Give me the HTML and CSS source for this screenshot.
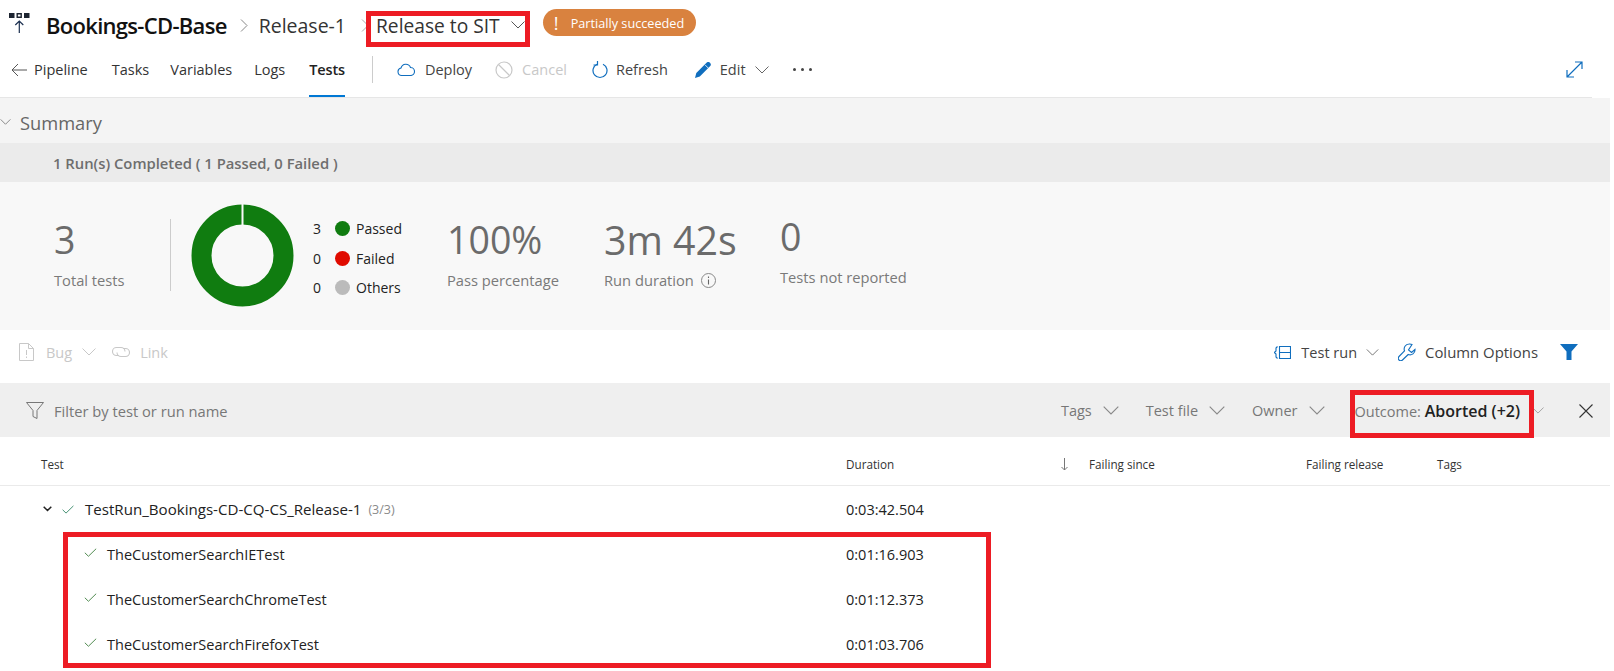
FILE: index.html
```html
<!DOCTYPE html>
<html lang="en">
<head>
<meta charset="utf-8">
<title>Bookings-CD-Base</title>
<link rel="stylesheet" href="styles.css">
</head>
<body>
<svg class="defs" width="0" height="0" aria-hidden="true">
  <symbol id="chev" viewBox="0 0 14 8"><path d="M.5.5 7 7 13.500.5" fill="none" stroke="currentColor" stroke-width="1"/></symbol>
  <symbol id="check" viewBox="0 0 14 10"><path d="M.7 5.300 4.700 9.200 13.300.8" fill="none" stroke="currentColor" stroke-width="1.100"/></symbol>
</svg>
<div class="page">
  <header class="titlebar">
    <svg class="logo" width="21" height="20" viewBox="0 0 21 20"><path d="M0 0h5.500v5H0zM15 0h5.500v5H15z" fill="#1c2430"/><path d="M8.200.7h4v3.600h-4z" fill="none" stroke="#1c2430" stroke-width="1.400"/><path d="M10.300 20V8M6.300 12l4-4 4 4" fill="none" stroke="#1c3050" stroke-width="1.200"/></svg>
    <span class="t-name">Bookings-CD-Base</span>
    <svg class="crumb" width="8" height="13" viewBox="0 0 8 13"><path d="M1 .5 7 6.500 1 12.500" fill="none" stroke="#888"/></svg>
    <span class="t-release">Release-1</span>
    <svg class="crumb crumb-2" width="8" height="13" viewBox="0 0 8 13"><path d="M1 .5 7 6.500 1 12.500" fill="none" stroke="#aaa"/></svg>
    <span class="t-stage">Release to SIT</span>
    <svg class="t-chev" width="14" height="8"><use href="#chev"/></svg>
    <span class="badge"><b class="badge-mark">!</b>Partially succeeded</span>
  </header>

  <nav class="toolbar">
    <svg class="back" width="16" height="14" viewBox="0 0 16 14"><path d="M16 7H1M7 1 1 7l6 6" fill="none" stroke="#555"/></svg>
    <a class="tab tab-pipeline">Pipeline</a>
    <a class="tab tab-tasks">Tasks</a>
    <a class="tab tab-vars">Variables</a>
    <a class="tab tab-logs">Logs</a>
    <a class="tab tab-tests">Tests</a>
    <span class="tool-sep"></span>
    <svg class="ico-deploy" width="18" height="13" viewBox="0 0 18 13"><path d="M4.500 12.500a3.800 3.800 0 0 1-.5-7.500 5 5 0 0 1 9.500-.5 4 4 0 0 1 0 8z" fill="none" stroke="#106ebe" stroke-width="1.100"/></svg>
    <span class="cmd cmd-deploy">Deploy</span>
    <svg class="ico-cancel" width="18" height="18" viewBox="0 0 18 18"><circle cx="9" cy="9" r="8" fill="none" stroke="#c8c8c8" stroke-width="1.200"/><path d="M3.500 3.500l11 11" stroke="#c8c8c8" stroke-width="1.200"/></svg>
    <span class="cmd cmd-off cmd-cancel">Cancel</span>
    <svg class="ico-refresh" width="16" height="18" viewBox="0 0 16 18"><path d="M5 3.200a7 7 0 1 0 6 0" fill="none" stroke="#106ebe" stroke-width="1.200"/><path d="M5.500 0v4H1.500" fill="none" stroke="#106ebe" stroke-width="1.200"/></svg>
    <span class="cmd cmd-refresh">Refresh</span>
    <svg class="ico-edit" width="16" height="16" viewBox="0 0 16 16"><path d="M0 16l1.300-5L11.500.8a2.300 2.300 0 0 1 3.500 3.500L4.800 14.500z" fill="#106ebe"/><path d="M10 2.800l3.300 3.300" stroke="#fff" stroke-width=".8"/></svg>
    <span class="cmd cmd-edit">Edit</span>
    <svg class="cmd-chev" width="14" height="8"><use href="#chev"/></svg>
    <span class="dots"><i></i><i></i><i></i></span>
    <svg class="ico-expand" width="17" height="17" viewBox="0 0 17 17"><path d="M1 16 16 1M9 1h7v7M1 9v7h7" fill="none" stroke="#106ebe" stroke-width="1.200"/></svg>
  </nav>

  <section class="panel">
    <div class="summary-head">
      <svg class="sum-chev" width="11" height="6"><use href="#chev"/></svg>
      <span>Summary</span>
    </div>
    <div class="runs">1 Run(s) Completed ( 1 Passed, 0 Failed )</div>
    <div class="stats">
      <div class="stat stat-total"><div class="num">3</div><div class="lbl">Total tests</div></div>
      <div class="stat-div"></div>
      <svg class="donut" width="103" height="103" viewBox="0 0 103 103"><circle cx="51.500" cy="51.500" r="41" fill="none" stroke="#107c10" stroke-width="20"/><rect x="50.500" y="0" width="2" height="21" fill="#f8f8f8"/></svg>
      <ul class="legend">
        <li><span class="l-count">3</span><i class="l-dot l-pass"></i>Passed</li>
        <li><span class="l-count">0</span><i class="l-dot l-fail"></i>Failed</li>
        <li><span class="l-count">0</span><i class="l-dot l-other"></i>Others</li>
      </ul>
      <div class="stat"><div class="num">100%</div><div class="lbl">Pass percentage</div></div>
      <div class="stat"><div class="num num-run">3m 42s</div><div class="lbl">Run duration<svg class="info" width="15" height="15" viewBox="0 0 15 15"><circle cx="7.500" cy="7.500" r="7" fill="none" stroke="#888"/><path d="M7.500 6.500v5M7.500 3.500v1.400" stroke="#666" stroke-width="1.100"/></svg></div></div>
      <div class="stat stat-up"><div class="num">0</div><div class="lbl">Tests not reported</div></div>
    </div>
  </section>

  <div class="actions">
    <svg class="ico-bug" width="15" height="18" viewBox="0 0 15 18"><path d="M.5.500h9l5 5v12H.5zM9.500.5v5h5M7.500 7v5M7.500 13.500v1.500" fill="none" stroke="#c8c8c8"/></svg>
    <span class="act-off act-bug">Bug</span>
    <svg class="act-chev" width="14" height="8"><use href="#chev"/></svg>
    <svg class="ico-link" width="18" height="12" viewBox="0 0 18 12"><path d="M7 9.500H4.500a4 4 0 0 1 0-8H9a4 4 0 0 1 4 4" fill="none" stroke="#c8c8c8" stroke-width="1.100"/><path d="M11 2.500h2.500a4 4 0 0 1 0 8H9a4 4 0 0 1-4-4" fill="none" stroke="#c8c8c8" stroke-width="1.100"/></svg>
    <span class="act-off act-link">Link</span>
    <span class="spacer"></span>
    <svg class="ico-run" width="17" height="13" viewBox="0 0 17 13"><path d="M5.500.5h11v12h-11zM5.500 6.500h11" fill="none" stroke="#106ebe" stroke-width="1.100"/><path d="M3.500.5 2 2v3L.3 6.500 2 8v3l1.500 1.500" fill="none" stroke="#106ebe" stroke-width="1.100"/></svg>
    <span class="act act-run">Test run</span>
    <svg class="run-chev" width="13" height="7"><use href="#chev"/></svg>
    <svg class="ico-wrench" width="18" height="18" viewBox="0 0 18 18"><path d="M11 1a5 5 0 0 0-4.500 6.800L1 13.500a2.400 2.400 0 0 0 3.500 3.500l5.700-5.500A5 5 0 0 0 17 6.500l-3.500 3-3-2.500L14 1.500A5 5 0 0 0 11 1z" fill="none" stroke="#106ebe" stroke-width="1.100"/></svg>
    <span class="act act-cols">Column Options</span>
    <svg class="ico-filter" width="18" height="16" viewBox="0 0 18 16"><path d="M0 0h18l-6.500 7.500V16h-5V7.500z" fill="#106ebe"/></svg>
  </div>

  <div class="filterbar">
    <svg class="ico-funnel" width="18" height="17" viewBox="0 0 18 17"><path d="M.5.500h17L11 8.500v8L7 14.500v-6z" fill="none" stroke="#777"/></svg>
    <span class="fb-search">Filter by test or run name</span>
    <span class="spacer"></span>
    <span class="fb-item fb-tags">Tags</span><svg class="fb-chev" width="16" height="9"><use href="#chev"/></svg>
    <span class="fb-item fb-file">Test file</span><svg class="fb-chev" width="16" height="9"><use href="#chev"/></svg>
    <span class="fb-item fb-owner">Owner</span><svg class="fb-chev" width="16" height="9"><use href="#chev"/></svg>
    <span class="fb-item fb-outcome">Outcome: <b>Aborted (+2)</b></span><svg class="fb-chev fb-chev-last" width="12" height="7"><use href="#chev"/></svg>
    <svg class="fb-x" width="14" height="14" viewBox="0 0 14 14"><path d="M.5.500l13 13M13.500.500l-13 13" stroke="#333" stroke-width="1.100"/></svg>
  </div>

  <div class="grid thead">
    <span class="c-test">Test</span>
    <span class="c-dur">Duration</span>
    <svg class="c-sort" width="7" height="13" viewBox="0 0 7 13"><path d="M3.500 0v12M.5 9l3 3 3-3" fill="none" stroke="#777"/></svg>
    <span class="c-since">Failing since</span>
    <span class="c-rel">Failing release</span>
    <span class="c-tags">Tags</span>
  </div>

  <div class="grid row row-group">
    <span class="c-test group-name">
      <svg class="g-chev" width="9" height="6" viewBox="0 0 9 6"><path d="M.7.700 4.500 4.500 8.300.7" fill="none" stroke="#222" stroke-width="1.500"/></svg>
      <svg class="g-check" width="12" height="9"><use href="#check"/></svg>
      <span class="g-text">TestRun_Bookings-CD-CQ-CS_Release-1</span>
      <span class="g-count">(3/3)</span>
    </span>
    <span class="c-dur">0:03:42.504</span>
  </div>
  <div class="grid row">
    <span class="c-test case"><svg class="check" width="13" height="9"><use href="#check"/></svg>TheCustomerSearchIETest</span>
    <span class="c-dur">0:01:16.903</span>
  </div>
  <div class="grid row">
    <span class="c-test case"><svg class="check" width="13" height="9"><use href="#check"/></svg>TheCustomerSearchChromeTest</span>
    <span class="c-dur">0:01:12.373</span>
  </div>
  <div class="grid row">
    <span class="c-test case"><svg class="check" width="13" height="9"><use href="#check"/></svg>TheCustomerSearchFirefoxTest</span>
    <span class="c-dur">0:01:03.706</span>
  </div>

  <div class="mark mark-stage"></div>
  <div class="mark mark-outcome"></div>
  <div class="mark mark-rows"></div>
</div>
</body>
</html>
```

FILE: styles.css
```css
* { box-sizing: border-box; }
html, body { margin: 0; padding: 0; background: #fff; }
body { font-family: "Open Sans", "Noto Sans", sans-serif; font-size: 14.5px; color: #222; overflow: hidden; }
svg { display: block; flex: none; }
.defs { position: absolute; }
.page { position: relative; width: 1614px; height: 671px; overflow: hidden; }
.spacer { flex: 1; }

/* title bar */
.titlebar { height: 50px; display: flex; align-items: center; padding-left: 9px; }
.logo { margin-top: -4px; }
.t-name { margin-left: 16px; font-size: 22px; font-weight: 600; color: #111; letter-spacing: -.7px; white-space: nowrap; }
.crumb { margin-left: 13px; }
.t-release { margin-left: 11px; font-size: 19.5px; color: #333; }
.crumb-2 { margin-left: 15px; }
.t-stage { margin-left: 7px; font-size: 19.2px; color: #333; white-space: nowrap; }
.t-chev { margin-left: 11px; color: #555; }
.badge { margin-left: 18px; width: 153px; height: 27px; margin-top: -5px; background: #d9823f; color: #fff; border-radius: 14px; font-size: 12.7px; display: flex; align-items: center; padding-left: 11px; white-space: nowrap; }
.badge-mark { width: 17px; font-size: 18px; font-weight: 400; }

/* toolbar */
.toolbar { height: 48px; border-bottom: 1px solid #e6e6e6; width: 1592px; display: flex; align-items: center; padding-left: 11px; position: relative; }
.toolbar > * { margin-top: -8px; }
.tab { color: #333; white-space: nowrap; }
.toolbar .tab-pipeline { margin-left: 7px; }
.toolbar .tab-tasks { margin-left: 24px; }
.toolbar .tab-vars { margin-left: 21px; }
.toolbar .tab-logs { margin-left: 22px; }
.toolbar .tab-tests { margin-left: 24px; margin-top: 0; letter-spacing: -.15px; font-weight: 600; color: #222; align-self: stretch; display: flex; align-items: center; border-bottom: 2px solid #0078d4; height: 47px; padding-bottom: 7px; }
.tool-sep { width: 1px; height: 27px; background: #ccc; margin-left: 27px; }
.cmd { color: #444; white-space: nowrap; }
.ico-deploy { margin-left: 24px; }
.cmd-deploy { margin-left: 10px; }
.ico-cancel { margin-left: 23px; }
.cmd-cancel { margin-left: 9px; }
.cmd-off { color: #c8c8c8; }
.ico-refresh { margin-left: 25px; }
.cmd-refresh { margin-left: 8px; }
.ico-edit { margin-left: 27px; }
.cmd-edit { margin-left: 9px; }
.cmd-chev { margin-left: 9px; color: #666; }
.dots { margin-left: 24px; display: flex; gap: 5px; }
.dots i { width: 3px; height: 3px; background: #444; border-radius: 50%; }
.toolbar .ico-expand { position: absolute; left: 1566px; top: 11px; margin-top: 0; }

/* summary */
.panel { width: 1610px; background: #f8f8f8; height: 232px; }
.summary-head { height: 45px; background: #f4f4f4; display: flex; align-items: center; font-size: 18.3px; color: #666; padding-top: 3px; }
.sum-chev { color: #666; margin-right: 9px; }
.runs { height: 39px; background: #ebebeb; display: flex; align-items: center; padding-left: 53px; font-size: 14.8px; font-weight: 600; color: #6e6e6e; }
.stats { display: grid; grid-template-columns: 116px 21px 122px 134px 157px 176px 1fr; margin-left: 54px; }
.stat { padding-top: 33px; }
.stat-up { padding-top: 30px; }
.num { font-size: 37.5px; font-weight: 500; line-height: 50px; color: #6b6b6b; }
.num-run { font-size: 39.3px; }
.lbl { margin-top: 5px; line-height: 20px; color: #7a7a7a; display: flex; align-items: center; font-size: 14.7px; white-space: nowrap; }
.info { margin-left: 7px; }
.stat-div { margin-top: 37px; width: 1px; height: 72px; background: #ccc; }
.donut { margin-top: 22px; }
.legend { list-style: none; margin: 32px 0 0; padding: 0; }
.legend li { height: 29.500px; display: flex; align-items: center; font-size: 14px; color: #222; }
.l-count { width: 22px; }
.l-dot { width: 15px; height: 15px; border-radius: 50%; margin-right: 6px; }
.l-pass { background: #107c10; }
.l-fail { background: #e00b00; }
.l-other { background: #bbb; }

/* actions */
.actions { height: 53px; padding-left: 19px; padding-right: 36px; padding-bottom: 9px; display: flex; align-items: center; }
.act-off { color: #c8c8c8; }
.act-bug { margin-left: 12px; }
.act-chev { margin-left: 10px; color: #c8c8c8; }
.ico-link { margin-left: 16px; }
.act-link { margin-left: 10px; }
.act { color: #444; white-space: nowrap; }
.act-run { margin-left: 10px; }
.run-chev { margin-left: 9px; color: #666; }
.ico-wrench { margin-left: 19px; }
.act-cols { margin-left: 9px; font-size: 14.9px; }
.ico-filter { margin-left: 22px; }

/* filter bar */
.filterbar { height: 54px; background: #efefef; width: 1610px; display: flex; align-items: center; padding-left: 26px; padding-right: 17px; color: #777; padding-top: 1px; }
.fb-search { margin-left: 10px; font-size: 14.7px; }
.fb-item { white-space: nowrap; }
.fb-chev { margin-left: 11px; color: #888; }
.fb-file, .fb-owner { margin-left: 27px; }
.fb-outcome { margin-left: 30px; }
.fb-outcome b { font-weight: 600; color: #222; font-size: 16px; }
.fb-chev-last { margin-left: 12px; color: #999; }
.fb-x { margin-left: 35px; }

/* table */
.grid { display: grid; grid-template-columns: 805px 215px 28px 217px 131px 1fr; padding-left: 41px; align-items: center; width: 1610px; }
.thead { height: 49px; border-bottom: 1px solid #eaeaea; font-size: 11.7px; color: #333; padding-top: 6px; }
.row { height: 45px; }
.row-group { height: 46px; }
.c-dur { color: #222; }
.thead .c-dur { color: #333; }
.group-name { display: flex; align-items: center; margin-left: 2px; }
.g-check { margin-left: 10px; color: #3a8a6a; }
.g-text { margin-left: 11px; white-space: nowrap; font-size: 15.1px; }
.g-count { margin-left: 7px; font-size: 12.500px; color: #8a8a8a; }
.case { display: flex; align-items: center; margin-left: 43px; }
.check { margin-right: 10px; color: #4f8a4f; margin-top: -4px; }

/* annotation rectangles laid over the screenshot */
.mark { position: absolute; border: 5px solid #ed1c24; pointer-events: none; }
.mark-stage { left: 366px; top: 11px; width: 164px; height: 36px; }
.mark-outcome { left: 1350px; top: 390px; width: 184px; height: 48px; }
.mark-rows { left: 63px; top: 532px; width: 928px; height: 136px; }
```
